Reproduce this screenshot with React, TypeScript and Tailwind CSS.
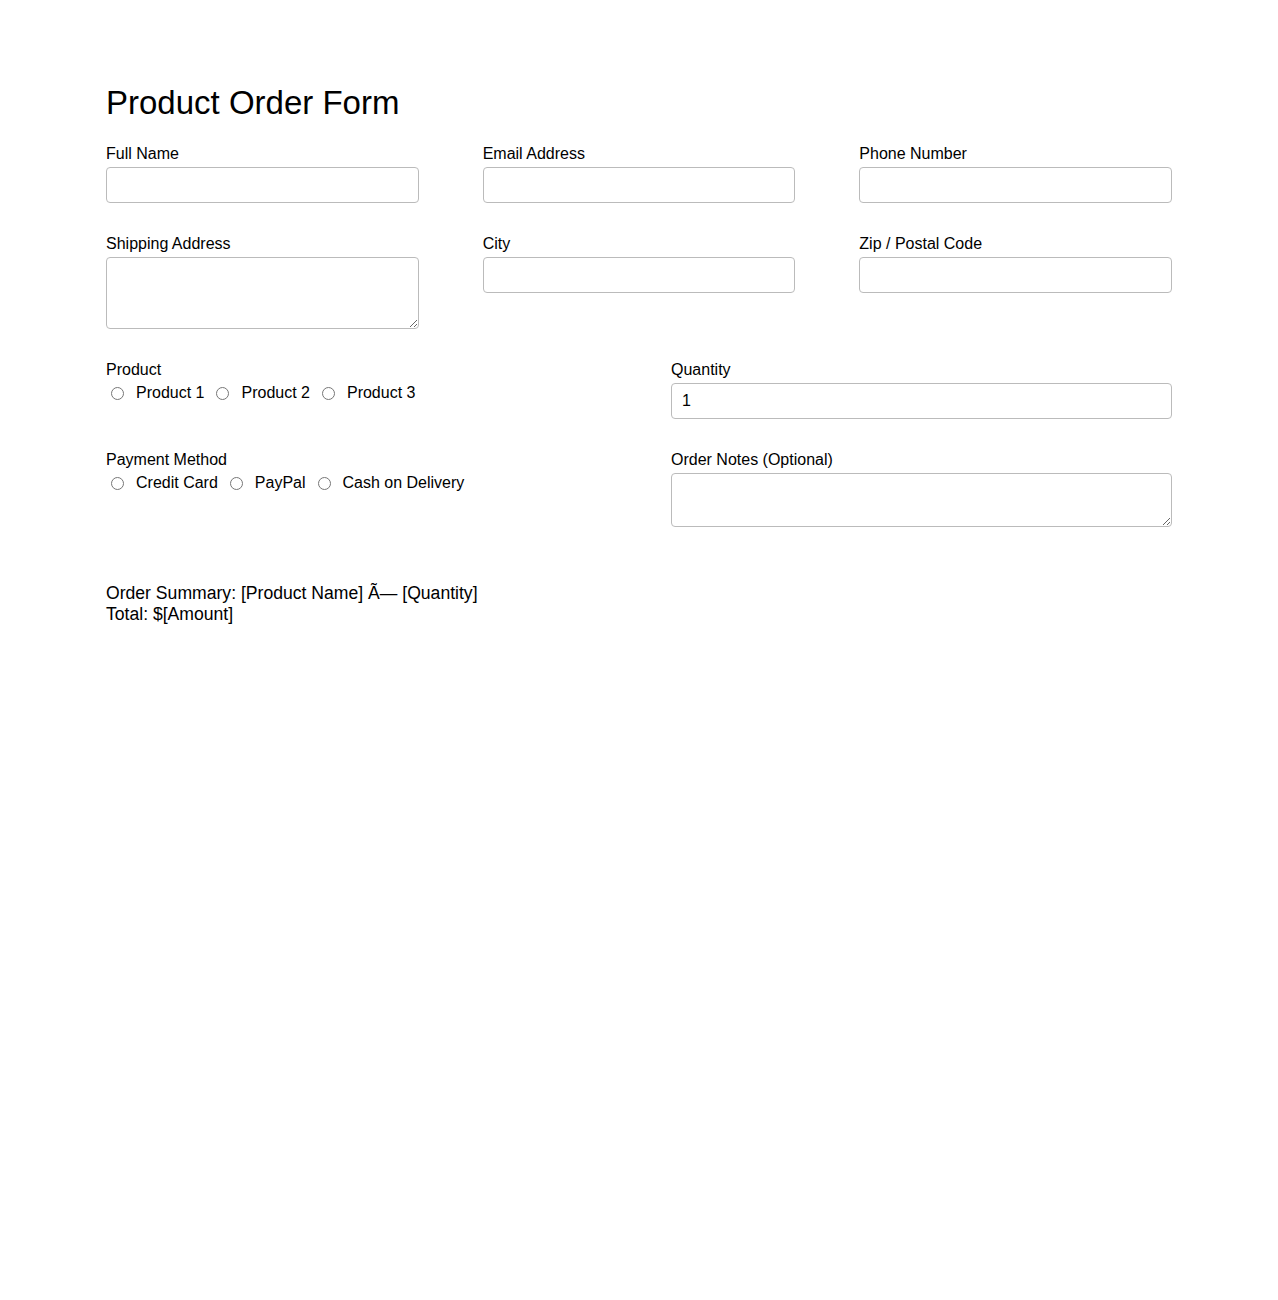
import React, { useState } from "react";

const font = { fontFamily: '"Liberation Sans", Arial, sans-serif' };

const inputCls =
    "block w-full h-[36px] px-[10px] border border-[#bbb] rounded-[4px] bg-white text-[16px] text-black outline-none";
const areaCls =
    "block w-full px-[10px] py-[6px] border border-[#bbb] rounded-[4px] bg-white text-[16px] text-black outline-none";

function Label({ children }: { children: React.ReactNode }) {
    return <label className="block text-[16px] leading-[20px] mb-[3px] text-black">{children}</label>;
}

function RadioGroup({ name, options }: { name: string; options: string[] }) {
    const [value, setValue] = useState("");
    return (
        <div className="flex items-center h-[18px] mt-[4px]">
            {options.map((opt) => (
                <label key={opt} className="flex items-center mr-[7px] text-[16px] leading-[18px]">
                    <input
                        type="radio"
                        name={name}
                        checked={value === opt}
                        onChange={() => setValue(opt)}
                        className="ml-[5px] w-[13px] h-[13px] m-0"
                    />
                    <span className="ml-[12px]">{opt}</span>
                </label>
            ))}
        </div>
    );
}

export default function App() {
    const [qty, setQty] = useState("1");

    return (
        <main className="min-h-screen bg-white text-black" style={font}>
            <div className="w-[1066px] mx-auto pt-[84px]">
                <h1 className="text-[33px] leading-[37px] font-normal mb-[23px]">Product Order Form</h1>

                {/* Contact + address */}
                <div className="grid grid-cols-3 gap-x-16 gap-y-[31px]">
                    <div>
                        <Label>Full Name</Label>
                        <input type="text" className={inputCls} />
                    </div>
                    <div>
                        <Label>Email Address</Label>
                        <input type="email" className={inputCls} />
                    </div>
                    <div>
                        <Label>Phone Number</Label>
                        <input type="tel" className={inputCls} />
                    </div>
                    <div>
                        <Label>Shipping Address</Label>
                        <textarea className={`${areaCls} h-[72px]`} />
                    </div>
                    <div>
                        <Label>City</Label>
                        <input type="text" className={inputCls} />
                    </div>
                    <div>
                        <Label>Zip / Postal Code</Label>
                        <input type="text" className={inputCls} />
                    </div>
                </div>

                {/* Product, payment, notes */}
                <div className="grid grid-cols-2 gap-x-16 gap-y-[31px] mt-[31px]">
                    <div>
                        <Label>Product</Label>
                        <RadioGroup name="product" options={["Product 1", "Product 2", "Product 3"]} />
                    </div>
                    <div>
                        <Label>Quantity</Label>
                        <input
                            type="text"
                            value={qty}
                            onChange={(e) => setQty(e.target.value)}
                            className={inputCls}
                        />
                    </div>
                    <div>
                        <Label>Payment Method</Label>
                        <RadioGroup name="payment" options={["Credit Card", "PayPal", "Cash on Delivery"]} />
                    </div>
                    <div>
                        <Label>Order Notes (Optional)</Label>
                        <textarea className={`${areaCls} h-[54px]`} />
                    </div>
                </div>

                <div className="mt-[56px] text-[17.6px] leading-[21px]">
                    <p>Order Summary: [Product Name] Ã— [Quantity]</p>
                    <p>Total: $[Amount]</p>
                </div>
            </div>
        </main>
    );
}
